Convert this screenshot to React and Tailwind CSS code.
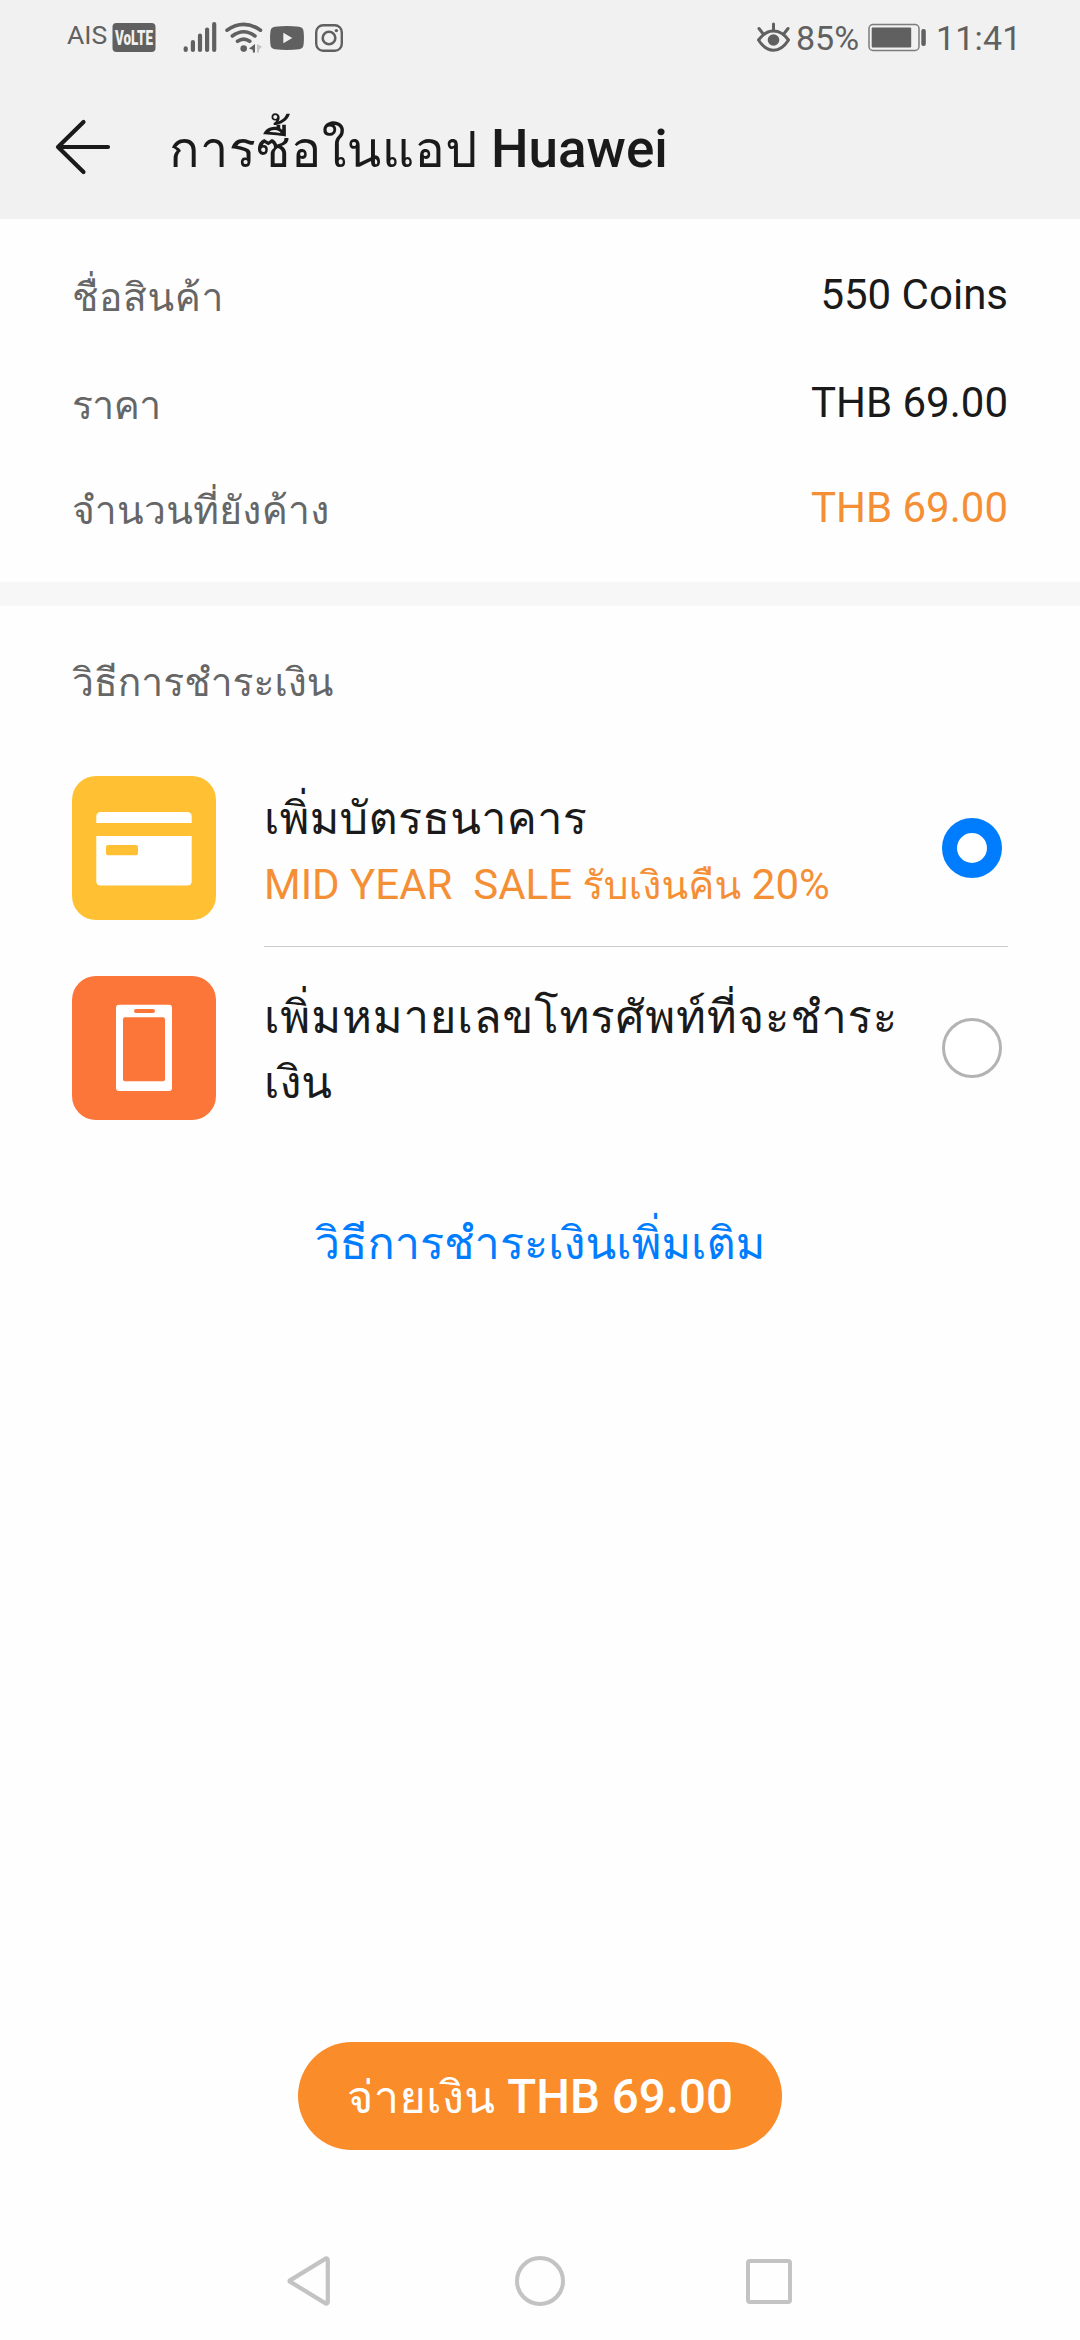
import React from "react";

function Thai({ className, children }) {
  return (
    <span className={`font-[Loma,'Noto_Sans_Thai_Looped',sans-serif] leading-none ${className}`}>
      {children}
    </span>
  );
}

function StatusBar() {
  return (
    <div className="flex h-[72px] items-start text-[#606060]">
      <span className="ml-[67px] w-[45px] pt-[22px] text-[26.5px] leading-[26px] whitespace-nowrap">AIS</span>
      <svg className="mt-[23px] h-[29px] w-[44px] overflow-visible" viewBox="0 0 44 29">
        <rect x="0.5" y="0" width="43" height="29" rx="4" fill="#606060" />
        <text x="3" y="22" fontFamily="Roboto, sans-serif" fontWeight="900" fontSize="20" textLength="38" lengthAdjust="spacingAndGlyphs" fill="#f1f1f1">VoLTE</text>
      </svg>
      <svg className="mt-[20px] ml-[26px] h-[34px] w-[36px]" viewBox="182 20 36 34" stroke="#606060" strokeWidth="4.2" strokeLinecap="round">
        <path d="M185.7 48.3V50M192.9 42V50M200 35.5V50M207.1 29.5V50M214.2 24V50" />
      </svg>
      <svg className="mt-[20px] ml-[6px] h-[34px] w-[40px]" viewBox="224 20 40 34" fill="none" stroke="#606060" strokeWidth="3.6" strokeLinecap="round">
        <path d="M227 30.2Q243.7 18.5 260.5 30.2M232.3 36Q243.7 27.5 255 36M237.5 41.3Q243.7 36.8 249.8 41.3" />
        <circle cx="243.7" cy="48.6" r="3.3" fill="#606060" stroke="none" />
        <path d="M255 44V52.5H252.8V50L249 48.6Z" fill="#606060" stroke="none" />
        <path d="M257 44V52.5H259V50L262 46.5Z" fill="#c4c4c4" stroke="none" />
      </svg>
      <svg className="mt-[26px] ml-[6px] h-[24px] w-[34px]" viewBox="0 0 34 24">
        <path d="M5 .8Q17-.6 29 .8Q33 1.2 33.5 5Q34.4 12 33.5 19Q33 22.8 29 23.3Q17 24.6 5 23.3Q1 22.8.5 19Q-.4 12 .5 5Q1 1.2 5 .8Z" fill="#606060" />
        <path d="M13.3 6.8L22.3 12L13.3 17.2Z" fill="#f1f1f1" />
      </svg>
      <svg className="mt-[24px] ml-[11px] h-[28px] w-[28px]" viewBox="0 0 28 28" fill="none" stroke="#606060">
        <rect x="1.2" y="1.2" width="25.6" height="25.6" rx="7" strokeWidth="2.4" />
        <circle cx="14" cy="14" r="6.3" strokeWidth="2.6" />
        <circle cx="21.4" cy="6.6" r="1.7" fill="#606060" stroke="none" />
      </svg>
      <svg className="mt-[20px] ml-[413px] h-[34px] w-[36px]" viewBox="756 20 36 34" fill="none" stroke="#606060" strokeWidth="3" strokeLinecap="round">
        <path d="M758.5 40Q765 31 773.5 31T788.5 40Q782 50.3 773.5 50.3T758.5 40Z" strokeLinejoin="round" />
        <circle cx="773.5" cy="40" r="5.8" fill="#606060" stroke="none" />
        <path d="M773.5 24V30M759 28.5L762.5 33M788 28.5L784.5 33" />
      </svg>
      <span className="ml-[4px] w-[70px] pt-[18px] text-[34px] leading-[40px] whitespace-nowrap">85%</span>
      <svg className="mt-[23px] ml-[2px] h-[29px] w-[60px]" viewBox="868 23 60 29">
        <rect x="869" y="24.5" width="50" height="26" rx="4" fill="none" stroke="#7c7c7c" strokeWidth="1.5" />
        <rect x="871.7" y="27.4" width="39.5" height="20.2" rx="1" fill="#606060" />
        <rect x="921.3" y="29" width="4.5" height="17" rx="2" fill="#606060" />
      </svg>
      <span className="ml-[8px] pt-[18px] text-[34px] leading-[40px] tracking-[0.2px] whitespace-nowrap">11:41</span>
    </div>
  );
}

function Header() {
  return (
    <div className="flex h-[147px] items-start">
      <svg className="mt-[46px] ml-[54px] h-[58px] w-[58px]" viewBox="54 118 58 58" fill="none" stroke="#1a1a1a" strokeWidth="4.2" strokeLinecap="round" strokeLinejoin="round">
        <path d="M83.5 122L58 147L83.5 172M59 147H108" />
      </svg>
      <h1 className="mt-[40px] ml-[57px] text-[53px] leading-[74px] font-medium whitespace-pre text-[#1a1a1a]">
        <Thai className="text-[50.5px] font-normal tracking-[0.4px]">การซื้อในแอป</Thai> Huawei
      </h1>
    </div>
  );
}

function DetailRow({ label, value, className, labelClass, valueClass }) {
  return (
    <div className={`flex items-start justify-between text-[42px] leading-[56px] ${className}`}>
      <span className="pt-[2px] text-[#666666]">
        <Thai className={`text-[39px] ${labelClass}`}>{label}</Thai>
      </span>
      <span className={`whitespace-nowrap ${valueClass}`}>{value}</span>
    </div>
  );
}

function CardIcon() {
  return (
    <svg className="h-[144px] w-[144px] shrink-0" viewBox="0 0 144 144">
      <rect width="144" height="144" rx="24" fill="#ffc133" />
      <path d="M24.3 47V40.5Q24.3 36 29 36H115Q119.7 36 119.7 40.5V47ZM24.3 60H119.7V105Q119.7 109.5 115.5 109.5H28.5Q24.3 109.5 24.3 105Z" fill="#fff" />
      <rect x="34" y="69" width="32" height="10.3" rx="2" fill="#ffc133" />
    </svg>
  );
}

function PhoneIcon() {
  return (
    <svg className="h-[144px] w-[144px] shrink-0" viewBox="0 0 144 144">
      <rect width="144" height="144" rx="24" fill="#fc763a" />
      <rect x="44" y="28.7" width="56" height="86.3" rx="3" fill="#fff" />
      <rect x="51" y="41.3" width="42" height="64" rx="2" fill="#fc763a" />
      <rect x="62" y="33" width="21" height="4" rx="2" fill="#fc763a" />
    </svg>
  );
}

function NavBar() {
  return (
    <div className="flex h-[118px] items-center pl-[287px]">
      <svg className="h-[50px] w-[43px]" viewBox="0 0 43 50" fill="none" stroke="#c3c3c3" strokeWidth="4.2" strokeLinejoin="round">
        <path d="M2.6 25L2.6 24.6L38.6 2.6Q40.8 2 40.8 4V46Q40.8 48 38.6 47.4L2.6 25.4Z" />
      </svg>
      <span className="ml-[185px] h-[50px] w-[50px] rounded-full border-[4.5px] border-[#c3c3c3]" />
      <span className="ml-[181px] h-[45px] w-[46px] rounded-[4px] border-[4.5px] border-[#c3c3c3]" />
    </div>
  );
}

export default function App() {
  return (
    <div className="flex h-[2340px] w-[1080px] flex-col overflow-hidden bg-[#fefefe] font-[Roboto,sans-serif]">
      <header className="bg-[#f1f1f1]">
        <StatusBar />
        <Header />
      </header>

      <section className="h-[363px] px-[72px] pt-[48px]">
        <DetailRow label="ชื่อสินค้า" value="550 Coins" className="h-[108px]" labelClass="tracking-[0.6px]" valueClass="text-[#1a1a1a]" />
        <DetailRow label="ราคา" value="THB 69.00" className="h-[105px]" labelClass="tracking-[-0.6px]" valueClass="text-[#1a1a1a]" />
        <DetailRow label="จำนวนที่ยังค้าง" value="THB 69.00" className="h-[60px]" labelClass="tracking-[0.3px]" valueClass="text-[#f58f35]" />
      </section>

      <div className="h-[24px] bg-[#f7f7f7]" />

      <section className="flex flex-col px-[72px] pt-[48px]">
        <h2 className="h-[96px] text-[42px] leading-[56px] text-[#666666]">
          <Thai className="text-[39px]">วิธีการชำระเงิน</Thai>
        </h2>
        <div className="flex h-[196px] items-center">
          <CardIcon />
          <div className="ml-[48px] w-[678px] pt-[2px] whitespace-pre">
            <div className="mb-[6px] text-[48px] leading-[66px] text-[#1a1a1a]">
              <Thai className="text-[45px] tracking-[0.3px]">เพิ่มบัตรธนาคาร</Thai>
            </div>
            <div className="text-[42px] leading-[56px] text-[#f58f35]">
              MID YEAR  SALE <Thai className="text-[39px] tracking-[0.2px]">รับเงินคืน</Thai> 20%
            </div>
          </div>
          <span className="h-[60px] w-[60px] shrink-0 rounded-full border-[15px] border-[#007dff] bg-white" />
        </div>
        <div className="ml-[192px] h-px bg-[#cbcbcb]" />
        <div className="flex h-[202px] items-center">
          <PhoneIcon />
          <div className="ml-[48px] w-[678px] pt-[2px] text-[48px] leading-[65px] whitespace-pre text-[#1a1a1a]">
            <div>
              <Thai className="text-[45.5px] tracking-[0.8px]">เพิ่มหมายเลขโทรศัพท์ที่จะชำระ</Thai>
            </div>
            <div>
              <Thai className="text-[45px]">เงิน</Thai>
            </div>
          </div>
          <span className="h-[60px] w-[60px] shrink-0 rounded-full border-[3px] border-[#b3b3b3] bg-white" />
        </div>
        <div className="mt-[61px] text-center text-[48px] leading-[66px] text-[#007dff]">
          <Thai className="text-[45px]">วิธีการชำระเงินเพิ่มเติม</Thai>
        </div>
      </section>

      <button className="mt-auto mb-[72px] h-[108px] w-[484px] self-center rounded-full bg-[#fb8c2a] pt-[3px] text-[47.5px] leading-[105px] font-medium whitespace-nowrap text-white">
        <Thai className="text-[45px] font-normal tracking-[0.4px]">จ่ายเงิน</Thai> THB 69.00
      </button>
      <NavBar />
    </div>
  );
}
